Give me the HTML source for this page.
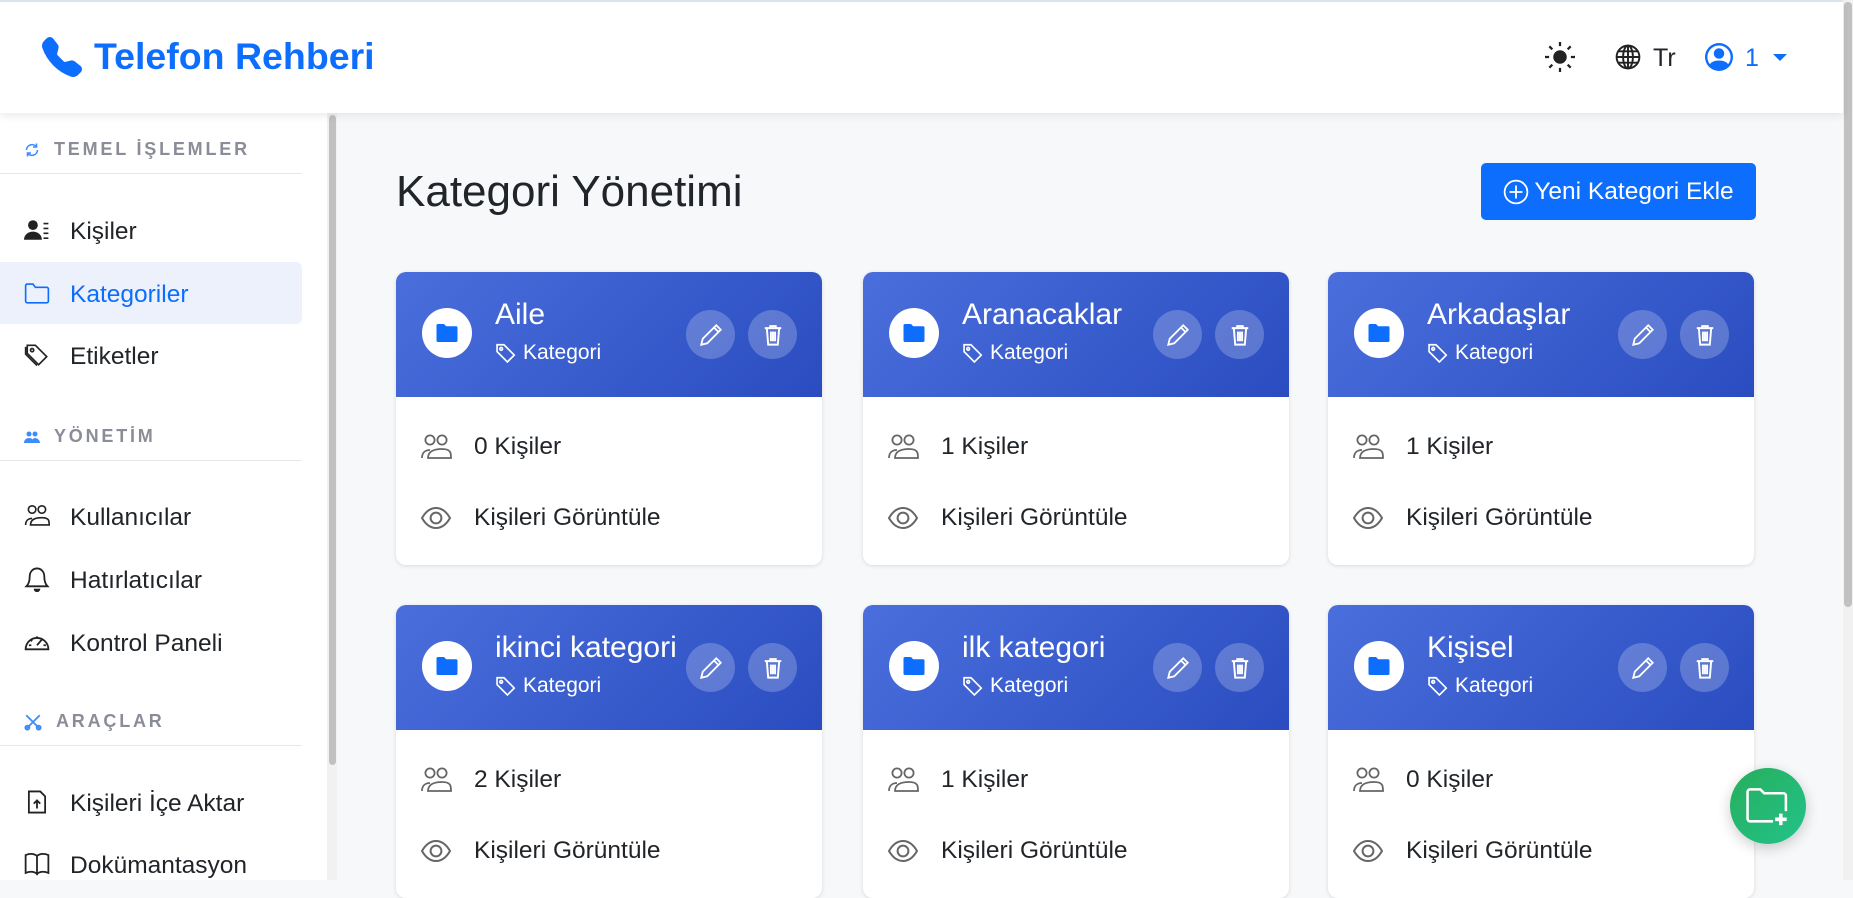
<!DOCTYPE html>
<html><head><meta charset="utf-8"><style>
*{box-sizing:border-box;margin:0;padding:0}
body{width:1853px;height:880px;overflow:hidden;background:#f7f8fa;font-family:"Liberation Sans",sans-serif;color:#212529;position:relative}
.hdr{position:absolute;left:0;top:0;width:1843px;height:113px;background:#fff;border-top:2px solid #dde3ea;box-shadow:0 3px 8px rgba(0,0,0,.08);z-index:3}
.logo{position:absolute;left:42px;top:33px;display:flex;align-items:center;color:#0d6efd;font-weight:bold;font-size:37.5px}
.logo svg{margin-right:12px}
.side{position:absolute;left:0;top:113px;width:327px;height:767px;background:#fff}
.sb{position:absolute;left:327px;top:113px;width:10px;height:767px;background:#f1f1f1}
.sb i{position:absolute;left:2px;top:2px;width:7px;height:650px;background:#c1c1c1;border-radius:4px}
.pgsb{position:absolute;left:1843px;top:0;width:10px;height:880px;background:#f1f1f1}
.pgsb i{position:absolute;left:1px;top:2px;width:8px;height:605px;background:#c1c1c1;border-radius:4px}
.sec{position:absolute;left:24px;font-size:18px;font-weight:bold;letter-spacing:2.8px;color:#8a8d98;display:flex;align-items:center;gap:14px}
.line{position:absolute;left:0;width:302px;height:1px;background:#e5e7ea}
.it{position:absolute;left:0;width:302px;height:62px;display:flex;align-items:center;padding-left:24px;padding-top:3px;font-size:24.5px;gap:20px}
.it.act{background:#ecf1fc;color:#0d6efd;border-radius:0 6px 6px 0}
.it svg{width:26px;height:26px;margin-top:-3px}
h1{position:absolute;left:396px;top:167px;font-size:44px;font-weight:normal}
.btn{position:absolute;left:1481px;top:163px;width:275px;height:57px;background:#0d6efd;border-radius:5px;color:#fff;font-size:24.5px;display:flex;align-items:center;justify-content:center;gap:5px}
.card{position:absolute;width:426px;height:293px;background:#fff;border-radius:10px;box-shadow:0 1px 4px rgba(0,0,0,.12);overflow:hidden}
.ch{height:125px;background:linear-gradient(135deg,#4a6fdc,#2a4cc0);position:relative;color:#fff}
.circ{position:absolute;left:26px;top:36px;width:50px;height:50px;border-radius:50%;background:#fff;display:flex;align-items:center;justify-content:center}
.tt{position:absolute;left:99px;top:26px;font-size:30px}
.kt{position:absolute;left:99px;top:69px;font-size:21px;display:flex;align-items:center;gap:6px}
.ab{position:absolute;top:38px;width:49px;height:49px;border-radius:50%;background:rgba(255,255,255,.22);display:flex;align-items:center;justify-content:center}
.row{position:absolute;left:24px;display:flex;align-items:center;gap:22px;font-size:24.5px}
.fab{position:absolute;left:1730px;top:768px;width:76px;height:76px;border-radius:50%;background:linear-gradient(135deg,#27ae5c,#22c38a);box-shadow:0 4px 14px rgba(0,0,0,.2);display:flex;align-items:center;justify-content:center}
</style></head><body>
<div class="hdr">
 <div class="logo"><svg width="40" height="40" viewBox="0 0 16 16" fill="#0d6efd"><path d="M1.885.511a1.745 1.745 0 0 1 2.61.163L6.29 2.98c.329.423.445.974.315 1.494l-.547 2.19a.678.678 0 0 0 .178.643l2.457 2.457a.678.678 0 0 0 .644.178l2.189-.547a1.745 1.745 0 0 1 1.494.315l2.306 1.794c.829.645.905 1.870.163 2.611l-1.034 1.034c-.74.74-1.846 1.065-2.877.702a18.634 18.634 0 0 1-7.01-4.42 18.634 18.634 0 0 1-4.42-7.009c-.362-1.03-.037-2.137.703-2.877L1.885.511z"/></svg>Telefon Rehberi</div>
 <svg style="position:absolute;left:1545px;top:40px" width="30" height="30" viewBox="0 0 16 16" fill="#222"><circle cx="8" cy="8" r="3.6"/><path d="M8 0v2.2M8 13.8V16M0 8h2.2M13.8 8H16M2.3 2.3l1.6 1.6M12.1 12.1l1.6 1.6M2.3 13.7l1.6-1.6M12.1 3.9l1.6-1.6" stroke="#222" stroke-width="1.2"/></svg>
 <svg style="position:absolute;left:1615px;top:42px" width="26" height="26" viewBox="0 0 16 16" fill="none" stroke="#222" stroke-width="1.2"><circle cx="8" cy="8" r="7"/><ellipse cx="8" cy="8" rx="3" ry="7"/><path d="M1 8h14M2 4.5h12M2 11.5h12M8 1v14"/></svg>
 <div style="position:absolute;left:1653px;top:42px;font-size:25px">Tr</div>
 <svg style="position:absolute;left:1705px;top:41px" width="28" height="28" viewBox="0 0 16 16" fill="#0d6efd"><path d="M11 6a3 3 0 1 1-6 0 3 3 0 0 1 6 0z"/><path fill-rule="evenodd" d="M0 8a8 8 0 1 1 16 0A8 8 0 0 1 0 8zm8-6.6a6.6 6.6 0 0 0-5.2 10.7C3.5 11 5.3 10 8 10s4.5 1 5.2 2.1A6.6 6.6 0 0 0 8 1.4z"/></svg>
 <div style="position:absolute;left:1745px;top:42px;font-size:25px;color:#0d6efd">1</div>
 <div style="position:absolute;left:1773px;top:52px;border:7px solid transparent;border-top:7px solid #0d6efd;border-bottom:0"></div>
</div>
<div class="side">
 <div class="sec" style="top:26px"><svg width="16" height="16" viewBox="0 0 16 16" fill="none" stroke="#3d8bfd" stroke-width="1.6"><path d="M13.5 8A5.5 5.5 0 0 1 3.5 11M2.5 8a5.5 5.5 0 0 1 10-3"/><path d="M12.5 1.5v3.5H9M3.5 14.5V11H7" /></svg>TEMEL İŞLEMLER</div>
 <div class="line" style="top:60px"></div>
 <div class="it" style="top:86px"><svg viewBox="0 0 16 16" fill="#222"><circle cx="5.5" cy="5" r="3"/><path d="M0 14c0-3 2.5-5 5.5-5S11 11 11 14z"/><path d="M12 4h3M12 7h3M12 10h3M12 13h3" stroke="#222" stroke-width="1"/></svg>Kişiler</div>
 <div class="it act" style="top:149px"><svg viewBox="0 0 16 16" fill="none" stroke="#0d6efd" stroke-width="1"><path d="M1 3.5V13a1 1 0 0 0 1 1h12a1 1 0 0 0 1-1V5.5a1 1 0 0 0-1-1H7L5.5 2.5H2a1 1 0 0 0-1 1z"/></svg>Kategoriler</div>
 <div class="it" style="top:211px"><svg viewBox="0 0 16 16" fill="none" stroke="#222" stroke-width="1"><path d="M2 2h5l7 7-5 5-7-7z"/><circle cx="5" cy="5" r="1"/><path d="M1 3v4.5l7 7"/></svg>Etiketler</div>
 <div class="sec" style="top:313px"><svg width="16" height="16" viewBox="0 0 16 16" fill="#3d8bfd"><circle cx="5" cy="5" r="2.5"/><circle cx="11" cy="5" r="2.5"/><path d="M0 14c0-3 2-5 5-5s5 2 5 5zM8 14c0-3 1-5 3-5s5 2 5 5z"/></svg>YÖNETİM</div>
 <div class="line" style="top:347px"></div>
 <div class="it" style="top:372px"><svg viewBox="0 0 16 16" fill="none" stroke="#222" stroke-width="1"><circle cx="5" cy="4" r="2.3"/><circle cx="11" cy="4" r="2.3"/><path d="M1 13.5c0-2.5 1.5-4 4-4M4 13.5c0-3 2.5-4.5 7-4.5s4.5 2 4.5 4.5z"/></svg>Kullanıcılar</div>
 <div class="it" style="top:435px"><svg viewBox="0 0 16 16" fill="none" stroke="#222" stroke-width="1.1"><path d="M8 1.5c-2.5 0-4.5 2-4.5 5 0 3-1 5-2 6h13c-1-1-2-3-2-6 0-3-2-5-4.5-5z"/><path d="M6.5 14a1.5 1.5 0 0 0 3 0" fill="#222"/></svg>Hatırlatıcılar</div>
 <div class="it" style="top:498px"><svg viewBox="0 0 16 16" fill="none" stroke="#222" stroke-width="1.1"><path d="M1 12.5a7 7 0 1 1 14 0z"/><path d="M8 4.5v1.5M4 6.5l1 1M3 10h1.5M12 10h1.5M8 10l3-3.5"/></svg>Kontrol Paneli</div>
 <div class="sec" style="top:598px"><svg width="18" height="18" viewBox="0 0 16 16" fill="none" stroke="#3d8bfd" stroke-width="1.6"><path d="M2 2l12 12M14 2L2 14"/><circle cx="3" cy="13" r="1.8"/><circle cx="13" cy="13" r="1.8"/></svg>ARAÇLAR</div>
 <div class="line" style="top:632px"></div>
 <div class="it" style="top:658px"><svg viewBox="0 0 16 16" fill="none" stroke="#222" stroke-width="1.1"><path d="M3 1.5h7l3 3V14.5H3z"/><path d="M8 12V7M6 9l2-2 2 2"/></svg>Kişileri İçe Aktar</div>
 <div class="it" style="top:720px"><svg viewBox="0 0 16 16" fill="none" stroke="#222" stroke-width="1.1"><path d="M1 2.5c2.5-1 5-1 7 .5v11c-2-1.5-4.5-1.5-7-.5zM15 2.5c-2.5-1-5-1-7 .5v11c2-1.5 4.5-1.5 7-.5z"/></svg>Dokümantasyon</div>
</div>
<div class="sb"><i></i></div>
<div class="pgsb"><i></i></div>
<h1>Kategori Yönetimi</h1>
<div class="btn"><svg width="26" height="26" viewBox="0 0 16 16" fill="none" stroke="#fff" stroke-width="1.1"><circle cx="8" cy="8" r="7"/><path d="M8 4v8M4 8h8"/></svg>Yeni Kategori Ekle</div>

<div id="cards"></div>
<div class="card" style="left:396px;top:272px"><div class="ch"><div class="circ"><svg width="24" height="22" viewBox="0 0 16 14" fill="#0d6efd"><path d="M1 2a1 1 0 0 1 1-1h4l1.5 1.5H14a1 1 0 0 1 1 1V12a1 1 0 0 1-1 1H2a1 1 0 0 1-1-1z"/></svg></div><div class="tt">Aile</div><div class="kt"><svg width="22" height="22" viewBox="0 0 16 16" fill="none" stroke="#fff" stroke-width="1.2"><path d="M1.5 2h5l7.5 7.5-5 5L1.5 7z"/><circle cx="4.5" cy="5" r="1"/></svg>Kategori</div><div class="ab" style="left:290px"><svg width="24" height="24" viewBox="0 0 16 16" fill="none" stroke="#fff" stroke-width="1.2"><path d="M11.5 1.5l3 3-9 9-4 1 1-4z M10 3l3 3"/></svg></div><div class="ab" style="left:352px"><svg width="22" height="24" viewBox="0 0 16 16" fill="none" stroke="#fff" stroke-width="1.4"><path d="M2 3h12M6 3V1.5h4V3M3.5 3l1 12h7l1-12M6.5 5.5v7M8 5.5v7M9.5 5.5v7"/></svg></div></div>
<div class="row" style="top:161px"><svg width="32" height="28" viewBox="0 0 16 14" fill="none" stroke="#666" stroke-width=".9"><circle cx="5" cy="3.5" r="2.3"/><circle cx="11" cy="3.5" r="2.3"/><path d="M1 12.5c0-2.5 1.5-4 4-4M4 12.5c0-3 2.5-4.5 7-4.5s4.5 2 4.5 4.5z"/></svg>0 Kişiler</div>
<div class="row" style="top:232px"><svg width="32" height="24" viewBox="0 0 16 12" fill="none" stroke="#666" stroke-width="1"><path d="M1 6c2-3.5 4.5-5 7-5s5 1.5 7 5c-2 3.5-4.5 5-7 5S3 9.5 1 6z"/><circle cx="8" cy="6" r="2.7"/></svg>Kişileri Görüntüle</div></div>
<script>
const d=[["Aranacaklar",863,272,1],["Arkadaşlar",1328,272,1],["ikinci kategori",396,605,2],["ilk kategori",863,605,1],["Kişisel",1328,605,0]];
const tpl=document.querySelector('.card').outerHTML;
let h='';for(const[n,x,y,c]of d){h+=tpl.replace('left:396px;top:272px',`left:${x}px;top:${y}px`).replace('>Aile<',`>${n}<`).replace('>0 Kişiler',`>${c} Kişiler`);}
document.getElementById('cards').outerHTML=h;
</script>
<div class="fab"><svg width="46" height="42" viewBox="0 0 18 16" fill="none" stroke="#fff" stroke-width="1"><path d="M11 14H2a1 1 0 0 1-1-1V2.5a1 1 0 0 1 1-1h4l1.5 1.5H15a1 1 0 0 1 1 1V10"/><path d="M14 11v4.5M11.8 13.2h4.5" stroke-width="1.4"/></svg></div>
</body></html>
